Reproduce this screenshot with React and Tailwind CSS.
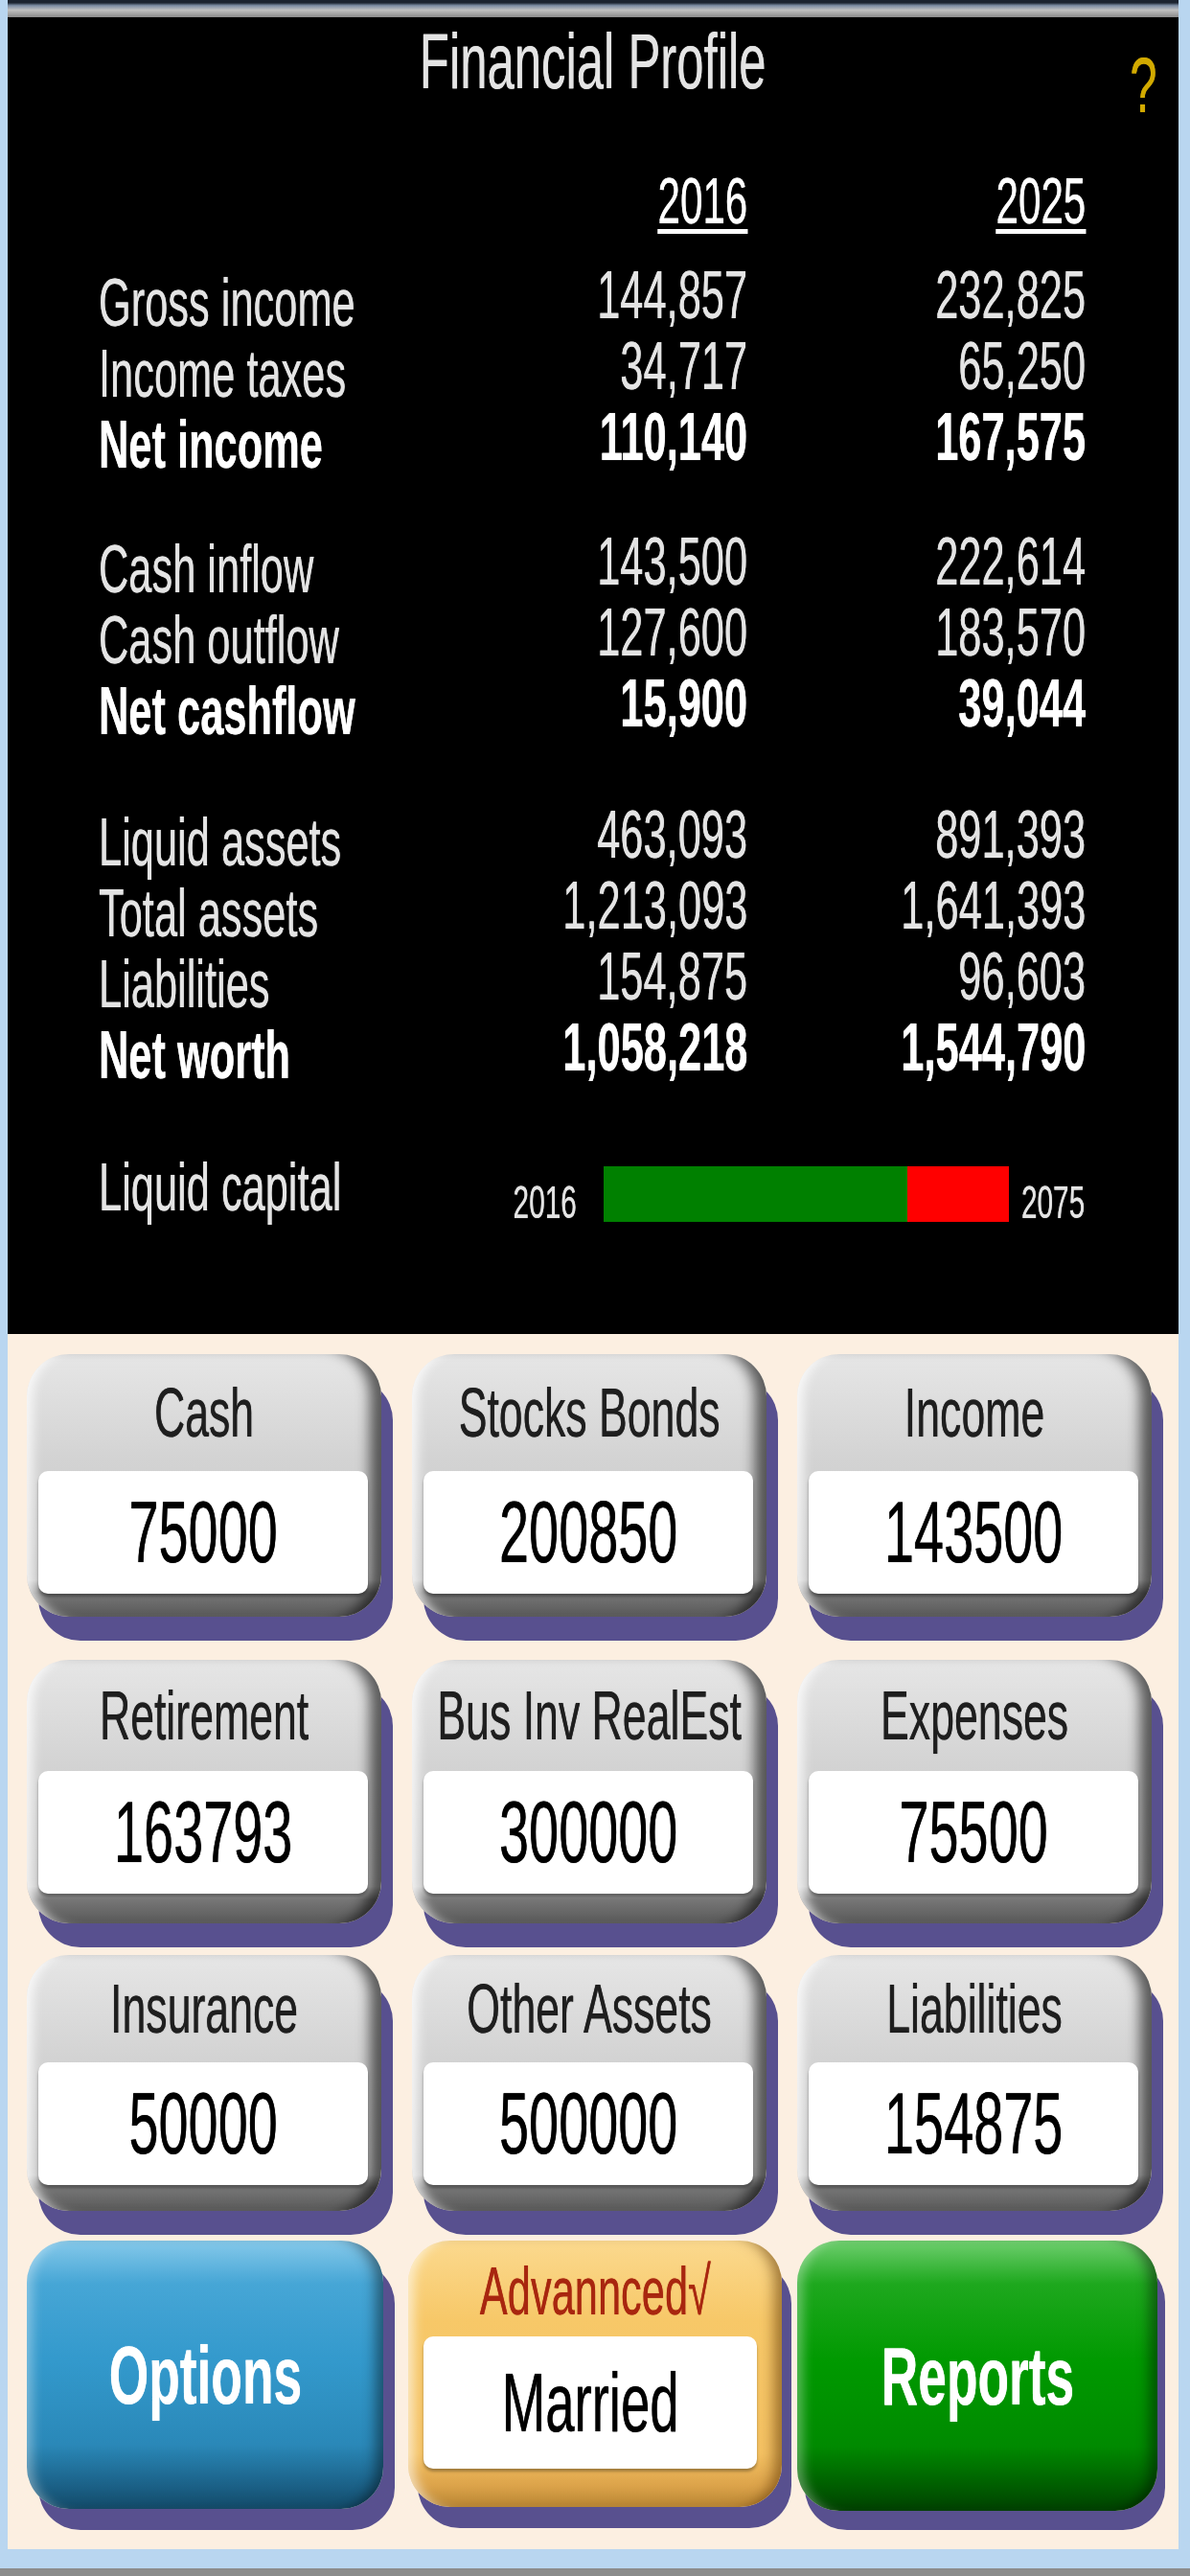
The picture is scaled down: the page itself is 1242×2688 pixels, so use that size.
const Sq = ({ children, origin = 'origin-center', className = '' }) => (
  <span className={`inline-block whitespace-nowrap scale-x-[0.62] ${origin} ${className}`}>
    {children}
  </span>
);

const sections = [
  {
    gap: 'mt-[36px]',
    rows: [
      ['Gross income', '144,857', '232,825'],
      ['Income taxes', '34,717', '65,250'],
      ['Net income', '110,140', '167,575', true],
    ],
  },
  {
    gap: 'mt-[56px]',
    rows: [
      ['Cash inflow', '143,500', '222,614'],
      ['Cash outflow', '127,600', '183,570'],
      ['Net cashflow', '15,900', '39,044', true],
    ],
  },
  {
    gap: 'mt-[63px]',
    rows: [
      ['Liquid assets', '463,093', '891,393'],
      ['Total assets', '1,213,093', '1,641,393'],
      ['Liabilities', '154,875', '96,603'],
      ['Net worth', '1,058,218', '1,544,790', true],
    ],
  },
];

const gridRows = [
  {
    cell: 'h-[319px]',
    body: 'h-[274px]',
    label: 'h-[122px]',
    items: [
      ['Cash', '75000'],
      ['Stocks Bonds', '200850'],
      ['Income', '143500'],
    ],
  },
  {
    cell: 'h-[308px]',
    body: 'h-[275px]',
    label: 'h-[116px]',
    items: [
      ['Retirement', '163793'],
      ['Bus Inv RealEst', '300000'],
      ['Expenses', '75500'],
    ],
  },
  {
    cell: 'h-[298px]',
    body: 'h-[267px]',
    label: 'h-[112px]',
    items: [
      ['Insurance', '50000'],
      ['Other Assets', '500000'],
      ['Liabilities', '154875'],
    ],
  },
];

const DataRow = ({ label, a, b, bold }) => (
  <div
    className={`grid grid-cols-[317px_360px_353px] h-[74px] text-[70px] leading-[74px] ${
      bold ? 'font-bold text-white' : ''
    }`}
  >
    <div>
      <Sq origin="origin-left">{label}</Sq>
    </div>
    <div className="flex justify-end leading-[58px]">
      <Sq origin="origin-right">{a}</Sq>
    </div>
    <div className="flex justify-end leading-[58px]">
      <Sq origin="origin-right">{b}</Sq>
    </div>
  </div>
);

const GrayButton = ({ body, label, title, value }) => (
  <div
    className={`w-[370px] ${body} rounded-[44px] flex flex-col bg-[linear-gradient(to_bottom,#e6e6e6_0%,#d3d3d3_40%,#c6c6c6_86%,#767676_91%,#595959_100%)] shadow-[12px_25px_0_0_#58508f,inset_-20px_0_14px_-8px_rgba(0,0,0,0.6),inset_14px_0_12px_-8px_rgba(255,255,255,0.8)]`}
  >
    <div className={`${label} flex items-center justify-center text-[72px] leading-none text-[#1e1e1e]`}>
      <Sq>{title}</Sq>
    </div>
    <div className="ml-[12px] mr-[14px] h-[128px] rounded-[10px] bg-white flex items-center justify-center text-[90px] leading-none text-black shadow-[0_3px_3px_rgba(0,0,0,0.35)]">
      <Sq>{value}</Sq>
    </div>
  </div>
);

export default function App() {
  return (
    <div className="w-[1242px] h-[2688px] bg-[#b9d6f0] flex flex-col font-['Liberation_Sans',Arial,sans-serif] [text-shadow:0_0_1px_currentColor]">
      <div className="ml-[8px] mr-[12px] flex flex-col">
        <div className="h-[18px] bg-[linear-gradient(to_bottom,#1c2430_0%,#1c2430_16%,#7d8da3_32%,#c0c0c0_58%,#8a8a8a_100%)]" />

        {/* Financial profile panel */}
        <div className="h-[1374px] bg-black flex flex-col text-[#e4e4e4]">
          <div className="relative mt-[5px] h-[82px] text-center text-[82px] leading-[82px]">
            <Sq>Financial Profile</Sq>
            <span className="absolute right-[22px] top-[25px] text-[#d2aa00]">
              <Sq origin="origin-right">?</Sq>
            </span>
          </div>

          <div className="mt-[70px] pl-[95px] grid grid-cols-[317px_360px_353px] h-[68px] text-[68px] leading-[68px] text-white">
            <div />
            <div className="flex justify-end">
              <Sq origin="origin-right" className="underline decoration-[5px] underline-offset-[6px]">
                2016
              </Sq>
            </div>
            <div className="flex justify-end">
              <Sq origin="origin-right" className="underline decoration-[5px] underline-offset-[6px]">
                2025
              </Sq>
            </div>
          </div>

          {sections.map((s, i) => (
            <div key={i} className={`${s.gap} pl-[95px] flex flex-col`}>
              {s.rows.map(([label, a, b, bold]) => (
                <DataRow key={label} label={label} a={a} b={b} bold={bold} />
              ))}
            </div>
          ))}

          <div className="mt-[64px] pl-[95px] flex h-[80px]">
            <div className="w-[377px] text-[70px] leading-[74px]">
              <Sq origin="origin-left">Liquid capital</Sq>
            </div>
            <div className="w-[122px] mt-[29px] flex justify-end text-[48px] leading-[48px]">
              <Sq origin="origin-right">2016</Sq>
            </div>
            <div className="ml-[28px] mt-[15px] flex h-[58px] w-[423px]">
              <div className="w-[317px] bg-[#008000]" />
              <div className="flex-1 bg-[#ff0000]" />
            </div>
            <div className="ml-[13px] mt-[29px] text-[48px] leading-[48px]">
              <Sq origin="origin-left">2075</Sq>
            </div>
          </div>
        </div>

        {/* Entry buttons */}
        <div className="h-[1268px] bg-[#fcefe1] pt-[21px] pl-[20px] flex flex-col">
          {gridRows.map((r, i) => (
            <div key={i} className={`flex gap-[20px] ${r.cell}`}>
              {r.items.map(([title, value]) => (
                <div key={title} className="w-[382px]">
                  <GrayButton body={r.body} label={r.label} title={title} value={value} />
                </div>
              ))}
            </div>
          ))}

          <div className="flex gap-[20px] h-[302px]">
            <div className="w-[382px]">
              <div className="w-[372px] h-[280px] rounded-[44px] flex items-center justify-center text-white font-bold text-[86px] leading-none bg-[linear-gradient(to_bottom,#86c9ea_0%,#46a6d6_16%,#3399cc_45%,#2a88b8_76%,#1a5f85_92%,#134a68_100%)] shadow-[12px_22px_0_0_#58508f,inset_-16px_0_14px_-8px_rgba(0,0,0,0.45),inset_14px_0_12px_-8px_rgba(255,255,255,0.35)]">
                <Sq>Options</Sq>
              </div>
            </div>
            <div className="w-[382px]">
              <div className="w-[390px] -ml-[4px] h-[278px] rounded-[44px] flex flex-col bg-[linear-gradient(to_bottom,#fbd98e_0%,#f7c868_30%,#f4c162_80%,#dca34a_92%,#b88532_100%)] shadow-[10px_22px_0_0_#58508f,inset_-16px_0_14px_-8px_rgba(90,50,0,0.55),inset_14px_0_12px_-8px_rgba(255,255,255,0.6)]">
                <div className="h-[100px] pt-[18px] text-center text-[70px] leading-[70px] text-[#a8260f]">
                  <Sq>Advannced√</Sq>
                </div>
                <div className="ml-[16px] mr-[26px] h-[138px] rounded-[10px] bg-white flex items-center justify-center text-[88px] leading-none text-black shadow-[0_3px_3px_rgba(0,0,0,0.3)]">
                  <Sq>Married</Sq>
                </div>
              </div>
            </div>
            <div className="w-[382px]">
              <div className="w-[376px] h-[282px] rounded-[44px] flex items-center justify-center text-white font-bold text-[86px] leading-none bg-[linear-gradient(to_bottom,#6fcf6f_0%,#1ea81e_16%,#009900_45%,#008a00_76%,#005a00_92%,#004000_100%)] shadow-[8px_20px_0_0_#58508f,inset_-16px_0_14px_-8px_rgba(0,0,0,0.45),inset_14px_0_12px_-8px_rgba(255,255,255,0.35)]">
                <Sq>Reports</Sq>
              </div>
            </div>
          </div>
        </div>
      </div>
      <div className="h-[20px]" />
      <div className="h-[8px] bg-[#8c8c8c]" />
    </div>
  );
}
